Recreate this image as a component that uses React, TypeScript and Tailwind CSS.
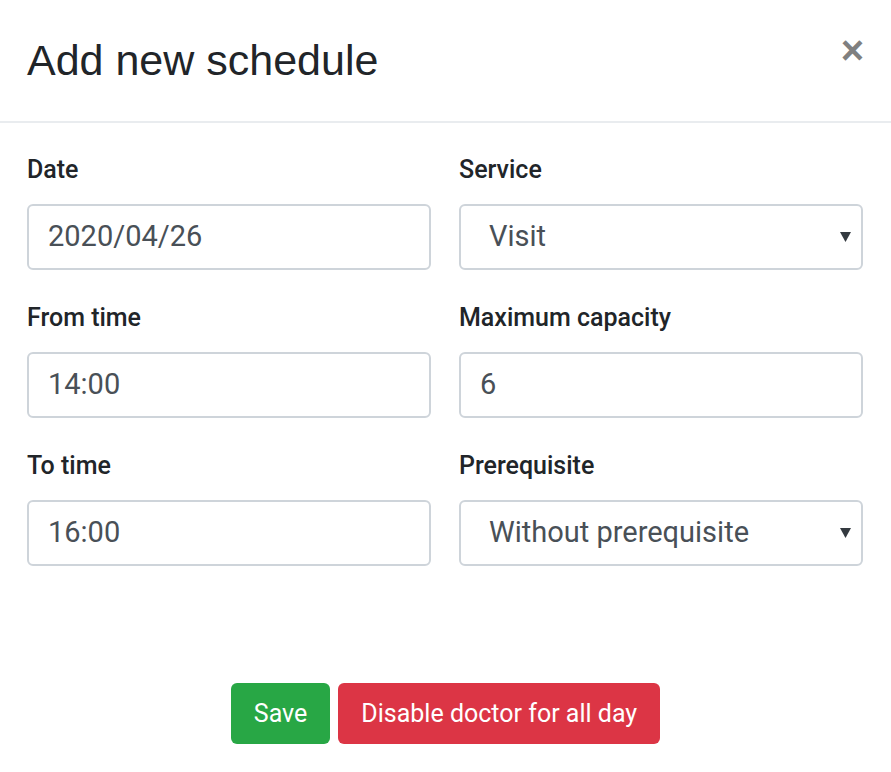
import React from 'react';

interface FieldProps {
    label: string;
    value: string;
    select?: boolean;
}

const Field: React.FC<FieldProps> = ({ label, value, select }) => {
    return (
        <div className="flex flex-col">
            <div className="h-[36px] text-[25px] leading-[36px] font-medium text-[#212529]">{label}</div>
            <div
                className={`mt-[16px] h-[66px] flex items-center justify-between border-2 border-[#ced4da] rounded-[6px] bg-white text-[29px] text-[#495057] ${
                    select ? 'pl-[28px] pr-[10px]' : 'px-[19px]'
                }`}
            >
                <span>{value}</span>
                {select && (
                    <svg width="11" height="10" viewBox="0 0 11 10">
                        <path d="M0 0 H11 L5.5 10 Z" fill="#343a40" />
                    </svg>
                )}
            </div>
        </div>
    );
};

export default function App() {
    return (
        <div className="w-[891px] h-[772px] bg-white font-['Roboto',sans-serif] overflow-hidden">
            <div className="h-[123px] flex items-start justify-between border-b-2 border-[#e9ecef] pl-[27px] pr-[27px]">
                <h5 className="mt-[38px] text-[43px] leading-[44px] text-[#212529] font-['Liberation_Sans',Arial,sans-serif]">
                    Add new schedule
                </h5>
                <span className="mt-[26px] text-[40px] leading-[48px] font-bold text-[#808080] font-['Liberation_Sans',Arial,sans-serif]">
                    ×
                </span>
            </div>

            <div className="pt-[29px] pl-[27px] pr-[28px] grid grid-cols-2 gap-x-[28px] gap-y-[30px]">
                <Field label="Date" value="2020/04/26" />
                <Field label="Service" value="Visit" select />
                <Field label="From time" value="14:00" />
                <Field label="Maximum capacity" value="6" />
                <Field label="To time" value="16:00" />
                <Field label="Prerequisite" value="Without prerequisite" select />
            </div>

            <div className="mt-[117px] flex justify-center gap-[8px]">
                <button className="h-[61px] px-[23px] rounded-[6px] bg-[#28a745] text-white text-[25px]">Save</button>
                <button className="h-[61px] px-[23px] rounded-[6px] bg-[#dc3545] text-white text-[25px]">
                    Disable doctor for all day
                </button>
            </div>
        </div>
    );
}
